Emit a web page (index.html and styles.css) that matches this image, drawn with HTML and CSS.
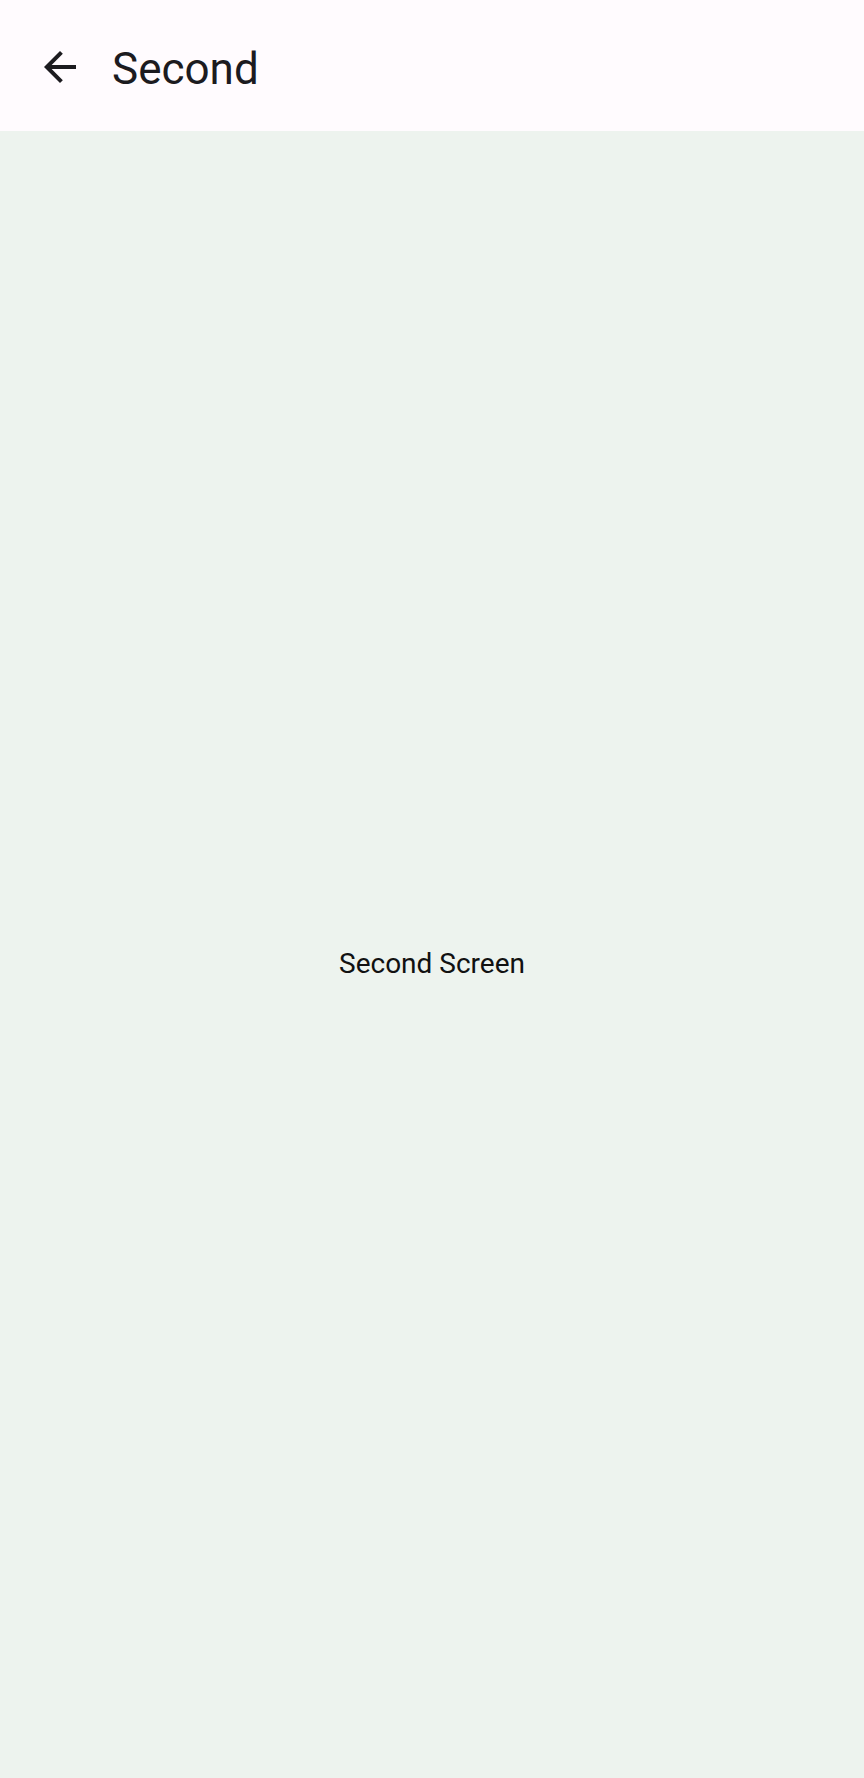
FILE: index.html
```html
<!DOCTYPE html>
<html>
<head>
<meta charset="utf-8">
<link rel="stylesheet" href="styles.css">
</head>
<body>
<div class="app">
  <header class="topbar">
    <button class="back" aria-label="Back">
      <svg viewBox="0 0 24 24" width="48" height="48"><path d="M20 11H7.83l5.59-5.59L12 4l-8 8 8 8 1.41-1.41L7.83 13H20v-2z" fill="#1c1b1f"/></svg>
    </button>
    <h1 class="title">Second</h1>
  </header>
  <main class="content">
    <p class="label">Second Screen</p>
  </main>
</div>
</body>
</html>
```
FILE: styles.css
```css
html, body {
  margin: 0;
  padding: 0;
  height: 100%;
}
body {
  font-family: Roboto, "Noto Sans", sans-serif;
  background: #edf3ee;
}
.app {
  display: flex;
  flex-direction: column;
  height: 1778px;
}
.topbar {
  height: 131px;
  flex: none;
  background: #fffbfe;
  display: flex;
  align-items: center;
  padding-left: 36px;
  box-sizing: border-box;
}
.back {
  width: 48px;
  height: 48px;
  padding: 0;
  border: none;
  background: transparent;
  display: flex;
  margin-top: 2px;
}
.title {
  margin: 6px 0 0 28px;
  font-size: 44px;
  font-weight: 400;
  color: #1c1b1f;
  line-height: 1;
}
.content {
  flex: 1;
  display: flex;
  align-items: center;
  justify-content: center;
  padding-top: 18px;
  background: #edf3ee;
}
.label {
  margin: 0;
  font-size: 28px;
  color: #111;
}
```
